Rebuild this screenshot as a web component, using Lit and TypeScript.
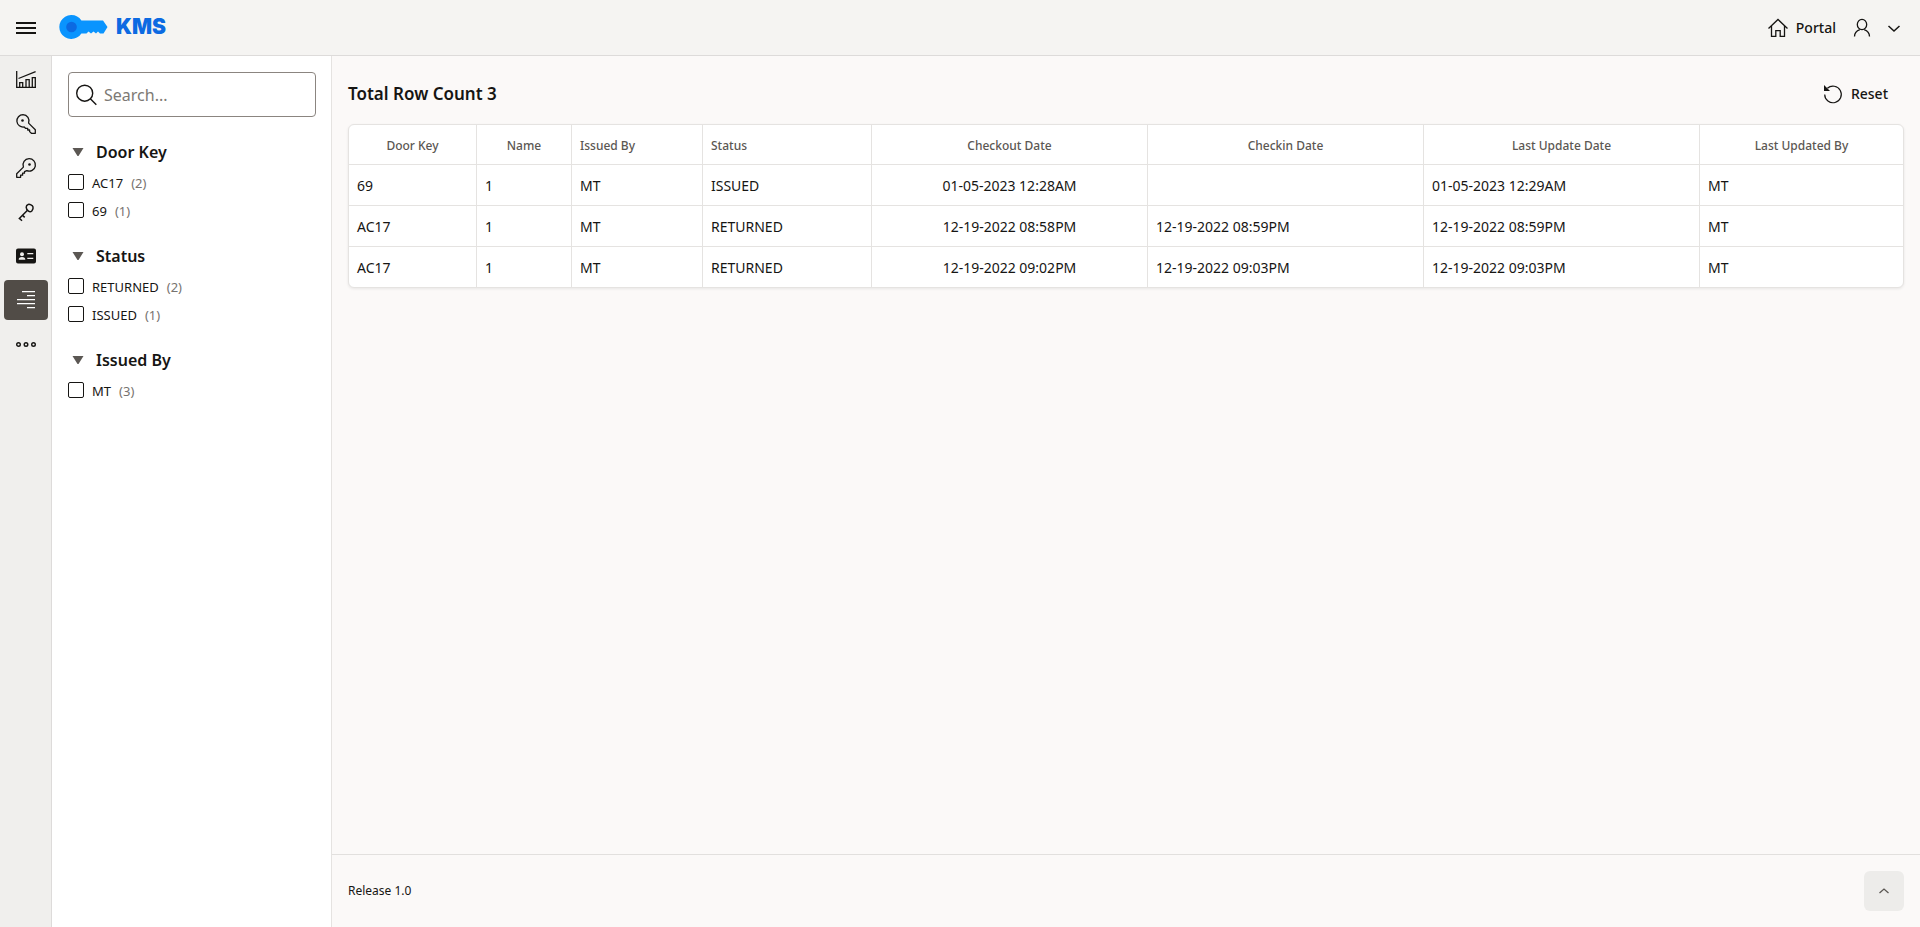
import { LitElement, html, css, svg, nothing } from "lit";
import { customElement, property, state } from "lit/decorators.js";
import { classMap } from "lit/directives/class-map.js";

const ICONS = {
  chart: svg`<path d="M.7 1v16.300H20M2.500 8.500 19.600 1.700M3.700 17v-4.300h3V17M10 17V9.700h3.200V17M16.300 17V7.700h3V17" fill="none" stroke="currentColor" stroke-width="1.300"/>`,
  keyDown: svg`<path d="M7 .7a6.200 6.200 0 1 0 1.200 12.300l1.300 1.300h2.200v1.700h1.900v1.600l1.800 1.700h3.900v-3.500L12.600 9.100A6.200 6.200 0 0 0 7 .7z" fill="none" stroke="currentColor" stroke-width="1.300" stroke-linejoin="round"/><circle cx="6.500" cy="6.500" r="1.300" fill="currentColor"/>`,
  keyUp: svg`<path d="M13 .7a6.200 6.200 0 0 0-5.600 8.400L.7 15.800v3.500h3.900v-2.100h2v-2h1.900v-1.500l2.300-1.100A6.200 6.200 0 1 0 13 .7z" fill="none" stroke="currentColor" stroke-width="1.300" stroke-linejoin="round"/><circle cx="13.500" cy="6.500" r="1.300" fill="currentColor"/>`,
  keySmall: svg`<g fill="none" stroke="currentColor" stroke-width="1.500"><path d="M10.200 5.200c0-1.400.8-2.500 2-2.800 1.500-.4 4.300.8 4.800 2.500.4 1.500-.4 3.100-1.200 4.100-1 1-2.200 1-3.300.2-1.300-1-2.300-2.300-2.300-4z"/><path d="M11.500 8.300 2.800 17M6.500 13.200l2.200 2.200M3.300 16.200 6 18.800"/></g>`,
  card: svg`<path fill-rule="evenodd" fill="currentColor" d="M2 2.500h16a2 2 0 0 1 2 2v11a2 2 0 0 1-2 2H2a2 2 0 0 1-2-2v-11a2 2 0 0 1 2-2zM6 6.200a2 2 0 1 0 0 4 2 2 0 0 0 0-4zM2.700 13.800h6.600c0-1.800-1-2.800-3.300-2.800s-3.300 1-3.300 2.800zM11.300 7v1.300h6V7zM11.300 11.700V13h6v-1.300z"/>`,
  lines: svg`<path d="M6 1.700h13M11 5.700h8M1 9.700h18M1 13.700h18M11 17.700h8" fill="none" stroke="currentColor" stroke-width="1.300"/>`,
  dots: svg`<g fill="none" stroke="currentColor" stroke-width="1.400"><circle cx="2.500" cy="10.500" r="1.800"/><circle cx="10" cy="10.500" r="1.800"/><circle cx="17.500" cy="10.500" r="1.800"/></g>`,
  menu: svg`<path d="M0 5h20M0 10h20M0 15h20" stroke="currentColor" stroke-width="2"/>`,
  home: svg`<path d="M.5 10.500 10 1.500l9.500 9M3.500 8v10.300h4.300v-5.600h4.400v5.600h4.300V8" fill="none" stroke="currentColor" stroke-width="1.300"/>`,
  user: svg`<ellipse cx="10" cy="6.500" rx="4.700" ry="5.200" fill="none" stroke="currentColor" stroke-width="1.300"/><path d="M2.500 18.500c0-3.500 2-5.500 5.300-6.800M17.500 18.500c0-3.500-2-5.500-5.300-6.800" fill="none" stroke="currentColor" stroke-width="1.300"/>`,
  down: svg`<path d="m4.500 8 5.500 5 5.500-5" fill="none" stroke="currentColor" stroke-width="1.500"/>`,
  up: svg`<path d="m5.500 12 4.500-4 4.500 4" fill="none" stroke="currentColor" stroke-width="1.300"/>`,
  reset: svg`<path d="M4.400 4.300A8.300 8.300 0 1 1 1.700 10.500" fill="none" stroke="currentColor" stroke-width="1.200"/><path d="M1 1v6h6z" fill="currentColor"/>`,
  search: svg`<circle cx="8.700" cy="8.200" r="8" fill="none" stroke="currentColor" stroke-width="1.400"/><path d="m14.300 13.800 6 6" stroke="currentColor" stroke-width="1.400"/>`,
};

type IconName = keyof typeof ICONS;

@customElement("kms-icon")
export class KmsIcon extends LitElement {
  @property() name: IconName = "menu";

  static styles = css`
    :host { display: inline-flex; flex: none; width: 20px; height: 20px; }
    svg { width: 100%; height: 100%; overflow: visible; }
  `;

  render() {
    return html`<svg viewBox="0 0 20 20" aria-hidden="true">${ICONS[this.name]}</svg>`;
  }
}

interface Facet { title: string; options: { value: string; count: number }[] }
interface Column { label: string; width: number; head: "start" | "center"; cell: "start" | "center" }

const FACETS: Facet[] = [
  { title: "Door Key", options: [{ value: "AC17", count: 2 }, { value: "69", count: 1 }] },
  { title: "Status", options: [{ value: "RETURNED", count: 2 }, { value: "ISSUED", count: 1 }] },
  { title: "Issued By", options: [{ value: "MT", count: 3 }] },
];

const COLUMNS: Column[] = [
  { label: "Door Key", width: 128, head: "center", cell: "start" },
  { label: "Name", width: 95, head: "center", cell: "start" },
  { label: "Issued By", width: 131, head: "start", cell: "start" },
  { label: "Status", width: 169, head: "start", cell: "start" },
  { label: "Checkout Date", width: 276, head: "center", cell: "center" },
  { label: "Checkin Date", width: 276, head: "center", cell: "start" },
  { label: "Last Update Date", width: 276, head: "center", cell: "start" },
  { label: "Last Updated By", width: 203, head: "center", cell: "start" },
];
const TOTAL_WIDTH = COLUMNS.reduce((sum, c) => sum + c.width, 0);

const ROWS = [
  ["69", "1", "MT", "ISSUED", "01-05-2023 12:28AM", "", "01-05-2023 12:29AM", "MT"],
  ["AC17", "1", "MT", "RETURNED", "12-19-2022 08:58PM", "12-19-2022 08:59PM", "12-19-2022 08:59PM", "MT"],
  ["AC17", "1", "MT", "RETURNED", "12-19-2022 09:02PM", "12-19-2022 09:03PM", "12-19-2022 09:03PM", "MT"],
];

const NAV: { icon: IconName; label: string }[] = [
  { icon: "chart", label: "Dashboard" },
  { icon: "keyDown", label: "Check out" },
  { icon: "keyUp", label: "Check in" },
  { icon: "keySmall", label: "Keys" },
  { icon: "card", label: "Holders" },
  { icon: "lines", label: "History" },
  { icon: "dots", label: "More" },
];

@customElement("app-root")
export class AppRoot extends LitElement {
  @state() private current = "History";

  static styles = css`
    :host {
      display: grid;
      grid-template: auto 1fr / 52px 280px minmax(0, 1fr);
      min-height: 100vh;
      color: #161513;
      background: #fbf9f8;
      font: 14px/20px "Noto Sans", "Open Sans", sans-serif;
    }
    * { box-sizing: border-box; }
    button, input { font: inherit; color: inherit; }
    button { border: 0; padding: 0; background: none; cursor: pointer; }
    a { color: inherit; text-decoration: none; }

    .header {
      grid-column: 1 / -1;
      display: flex;
      align-items: center;
      height: 56px;
      padding: 0 16px;
      background: #f5f4f2;
      border-bottom: 1px solid #dddbda;
    }
    .menu { display: flex; }
    .logo { display: flex; align-items: center; gap: 8px; margin: 0 auto 2px 23px; }
    .logo-key { width: 49px; height: 26px; }
    .logo-text { font: 900 21px/24px "Inter", sans-serif; color: #0c6ae2; }
    .actions { display: flex; align-items: center; gap: 16px; font-weight: 500; }
    .action { display: flex; align-items: center; gap: 8px; }
    .account { display: flex; align-items: center; gap: 12px; }

    .nav {
      display: flex;
      flex-direction: column;
      gap: 4px;
      padding: 4px 3px 4px 4px;
      background: #f0efed;
      border-right: 1px solid #dddbda;
    }
    .nav-item {
      display: flex;
      align-items: center;
      justify-content: center;
      height: 40px;
      border-radius: 4px;
    }
    .nav-item.active { background: #514c47; color: #fff; }

    .filters { padding: 16px 15px 16px 16px; background: #fff; border-right: 1px solid #e5e3e1; }
    .search {
      display: flex;
      align-items: center;
      gap: 8px;
      height: 45px;
      padding: 0 7px;
      border: 1px solid #8b8580;
      border-radius: 4px;
    }
    .search-input {
      flex: 1;
      min-width: 0;
      border: 0;
      outline: 0;
      padding: 0;
      background: none;
      font-size: 16px;
      line-height: 24px;
    }
    .search-input::placeholder { color: #7d7974; opacity: 1; }

    .facet { padding-top: 20px; }
    .search + .facet { padding-top: 23px; }
    .facet-title { margin: 0 0 4px; padding: 0 4px; font-size: 16px; line-height: 24px; font-weight: 600; }
    .toggle { display: flex; align-items: center; gap: 12px; }
    .triangle { width: 12px; height: 8px; fill: #5b5753; }
    .option { display: flex; align-items: center; gap: 8px; height: 28px; font-size: 13px; }
    .option span { padding-top: 2px; }
    .check {
      appearance: none;
      flex: none;
      width: 16px;
      height: 16px;
      margin: 0;
      border: 1px solid #161513;
      border-radius: 2px;
      background: #fff;
    }
    .check:checked { background: #161513; }
    .count { color: #77736f; }

    .main { display: flex; flex-direction: column; min-width: 0; }
    .content { flex: 1; padding: 18px 16px; }
    .toolbar { display: flex; align-items: center; justify-content: space-between; height: 40px; margin-bottom: 10px; padding-right: 16px; }
    .title { margin: 0; font-size: 17px; line-height: 24px; font-weight: 600; }
    .reset { display: flex; align-items: center; gap: 8px; font-weight: 500; }

    .card {
      overflow: hidden;
      border: 1px solid #e5e3e1;
      border-radius: 6px;
      background: #fff;
      box-shadow: 0 1px 3px rgba(0, 0, 0, 0.08);
    }
    .table { width: 100%; table-layout: fixed; border-collapse: separate; border-spacing: 0; }
    .head, .cell { height: 41px; padding: 2px 8px 0; border-right: 1px solid #e5e3e1; border-bottom: 1px solid #e5e3e1; text-align: left; white-space: nowrap; }
    .head { height: 40px; font-size: 12px; line-height: 16px; font-weight: 500; color: #5b5753; }
    .head:last-child, .cell:last-child { border-right: 0; }
    .row:last-child .cell { height: 40px; border-bottom: 0; }
    .center { text-align: center; }

    .footer {
      display: flex;
      align-items: center;
      justify-content: space-between;
      padding: 16px;
      border-top: 1px solid #e2e0de;
      font-size: 12px;
    }
    .top { display: flex; align-items: center; justify-content: center; width: 40px; height: 40px; border-radius: 6px; background: #edecea; color: #5b5753; }
  `;

  private renderFacet(facet: Facet) {
    return html`
      <section class="facet" aria-label=${facet.title}>
        <h3 class="facet-title">
          <button class="toggle" aria-expanded="true">
            <svg class="triangle" viewBox="0 0 12 8" aria-hidden="true"><path d="M.5 0h11L6.500 8h-1z" /></svg>
            ${facet.title}
          </button>
        </h3>
        ${facet.options.map(
          (o) => html`
            <label class="option">
              <input class="check" type="checkbox" name=${facet.title} .value=${o.value} />
              <span>${o.value}</span><span class="count">(${o.count})</span>
            </label>
          `
        )}
      </section>
    `;
  }

  render() {
    return html`
      <header class="header">
        <button class="menu" aria-label="Main navigation"><kms-icon name="menu"></kms-icon></button>
        <a class="logo" href="#">
          <svg class="logo-key" viewBox="0 0 49 26" aria-hidden="true">
            <path fill="#0a94fe" d="M12 1a12 12 0 0 1 10.400 5.500H44L48.500 13l-4 6.500H41l-2-2-2 2-2.500-2-2.500 2-2.500-2-2 2H22.400A12 12 0 1 1 12 1z" />
            <circle cx="12.500" cy="13" r="5.300" fill="#0c6ae2" />
          </svg>
          <span class="logo-text">KMS</span>
        </a>
        <div class="actions">
          <a class="action" href="#"><kms-icon name="home"></kms-icon>Portal</a>
          <button class="account" aria-label="Account">
            <kms-icon name="user"></kms-icon><kms-icon name="down"></kms-icon>
          </button>
        </div>
      </header>

      <nav class="nav" aria-label="Main">
        ${NAV.map(
          (n) => html`
            <a
              class=${classMap({ "nav-item": true, active: n.label === this.current })}
              href="#"
              aria-label=${n.label}
              aria-current=${n.label === this.current ? "page" : nothing}
              @click=${() => (this.current = n.label)}
              ><kms-icon name=${n.icon}></kms-icon
            ></a>
          `
        )}
      </nav>

      <aside class="filters">
        <label class="search">
          <kms-icon name="search"></kms-icon>
          <input class="search-input" type="text" placeholder="Search..." aria-label="Search" />
        </label>
        ${FACETS.map((f) => this.renderFacet(f))}
      </aside>

      <main class="main">
        <div class="content">
          <div class="toolbar">
            <h2 class="title">Total Row Count 3</h2>
            <button class="reset"><kms-icon name="reset"></kms-icon>Reset</button>
          </div>
          <div class="card">
            <table class="table">
              <colgroup>
                ${COLUMNS.map((c) => html`<col style="width:${(c.width / TOTAL_WIDTH) * 100}%" />`)}
              </colgroup>
              <thead>
                <tr>
                  ${COLUMNS.map((c) => html`<th scope="col" class=${classMap({ head: true, center: c.head === "center" })}>${c.label}</th>`)}
                </tr>
              </thead>
              <tbody>
                ${ROWS.map(
                  (r) => html`<tr class="row">
                    ${r.map((v, i) => html`<td class=${classMap({ cell: true, center: COLUMNS[i].cell === "center" })}>${v}</td>`)}
                  </tr>`
                )}
              </tbody>
            </table>
          </div>
        </div>
        <footer class="footer">
          <span>Release 1.0</span>
          <button class="top" aria-label="Back to top"><kms-icon name="up"></kms-icon></button>
        </footer>
      </main>
    `;
  }
}
